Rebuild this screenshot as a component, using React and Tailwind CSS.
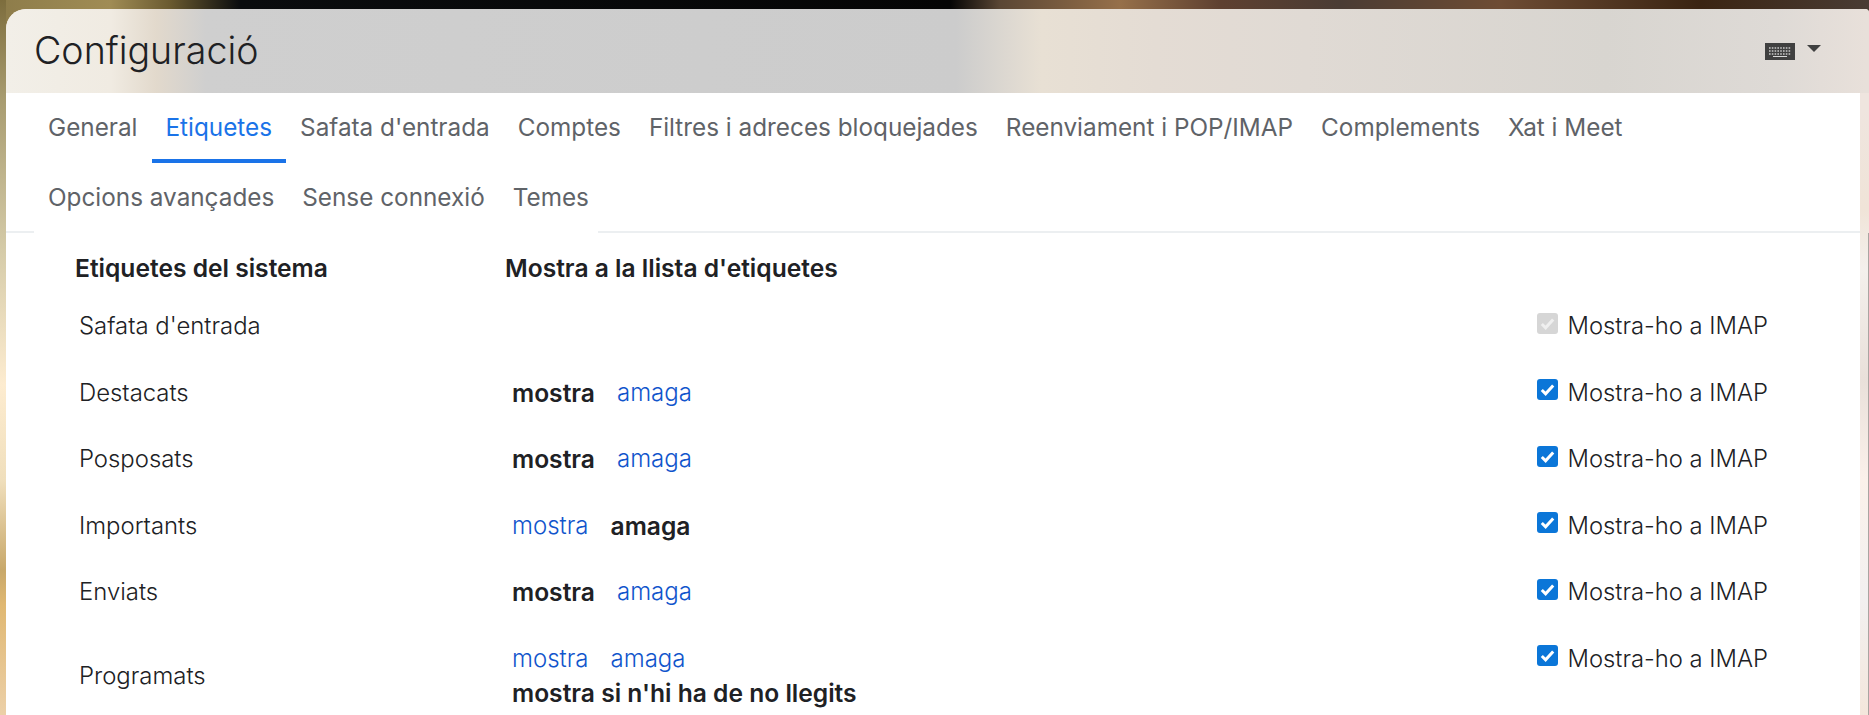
const tabsTop = ["General", "Etiquetes", "Safata d'entrada", "Comptes", "Filtres i adreces bloquejades", "Reenviament i POP/IMAP", "Complements", "Xat i Meet"];
const tabsBottom = ["Opcions avançades", "Sense connexió", "Temes"];

const Tab = ({ label }) => {
  const active = label === "Etiquetes";
  return (
    <div className={"h-[70px] px-[14px] pt-[16px] text-[24.3px] leading-[36px] whitespace-nowrap " + (active ? "text-[#1a73e8] border-b-[4px] border-[#1a73e8]" : "text-[#5f6368]")}>
      {label}
    </div>
  );
};

const Check = ({ disabled }) => (
  <span className={"w-[21px] h-[21px] rounded-[3px] flex items-center justify-center mt-[-6px] " + (disabled ? "bg-[#d6d6d6]" : "bg-[#0b76d8]")}>
    <svg width="15" height="15" viewBox="0 0 15 15" fill="none">
      <path d="M1.8 8l3.8 3.8L13.2 3.4" stroke={disabled ? "#efefef" : "#fff"} strokeWidth="3" />
    </svg>
  </span>
);

const Imap = ({ disabled, className = "" }) => (
  <div className={"flex items-center self-start gap-[9px] ml-auto mr-[92px] text-[23.8px] font-light leading-[32px] text-[#202124] " + className}>
    <Check disabled={disabled} />
    <span>Mostra-ho a IMAP</span>
  </div>
);

const Link = ({ children }) => <span className="font-light text-[24px] text-[#1155cc]">{children}</span>;
const Bold = ({ children }) => <span className="font-semibold text-[24.6px] text-[#202124]">{children}</span>;

const Row = ({ name, left, right, disabled }) => (
  <div className="flex items-start pt-[17px] h-[66.6px] text-[23.9px] leading-[32px] text-[#202124]">
    <div className="w-[506px] pl-[73px] font-light">{name}</div>
    <div className="flex gap-[22px]">
      {left}
      {right}
    </div>
    <Imap disabled={disabled} />
  </div>
);

export default function App() {
  return (
    <div className="relative flex h-screen w-full overflow-hidden font-['Inter',sans-serif] bg-[linear-gradient(90deg,#8d7c4a_0,#a08c55_110px,#6a5a30_170px,#0a0c0e_240px,#050505_950px,#5a4634_1000px,#96704a_1120px,#5e4030_1220px,#4a3c34_1340px,#6e4c34_1500px,#3a2412_1700px,#4a3c34_1869px)]">
      {/* photo edge on the left */}
      <div className="w-[6px] shrink-0 bg-[linear-gradient(180deg,#7d6d3d_0,#a89c70_100px,#d5cba8_250px,#fdecd0_385px,#f0dfbc_480px,#c8a86a_570px,#e0b872_605px,#ecd0a8_715px)]" />

      <div className="flex-1 min-w-0 pt-[9px]">
        <div className="h-full rounded-tl-[20px] rounded-tr-[4px] overflow-hidden bg-[linear-gradient(180deg,#efe5df_100px,#f0e4d8_200px,#f4f0ec_260px,#e9e0da_370px,#fbf1ea_470px,#f2f0f0_590px,#f4e6da_715px)]">
          <div className="flex items-center h-[84px] pl-[28px] pr-[48px] bg-[linear-gradient(90deg,#f2efe8_0,#f0ebe2_105px,#e2d9cc_150px,#cfcfcf_200px,#cccccc_950px,#e8e0d4_1035px,#e4dcd4_1150px,#e0dad4_1300px,#d8d5d0_1600px,#dedad6_1770px,#e8e0da_1860px)]">
            <h1 className="text-[37.6px] font-light leading-[50px] text-[#202124]">Configuració</h1>
            <div className="ml-auto flex items-start gap-[12px] mt-[1px]">
              <svg width="30" height="17" viewBox="0 0 30 17">
                <rect width="30" height="17" fill="#404040" />
                <path d="M4 5h22M4 8h22" stroke="#c9c9c9" strokeWidth="1.6" strokeDasharray="1.6 1.2" />
                <path d="M4 11h22" stroke="#c9c9c9" strokeWidth="1.4" strokeDasharray="1.6 1.2" />
                <path d="M8 13.5h14" stroke="#d8d8d8" strokeWidth="1.2" />
              </svg>
              <svg width="14" height="7" viewBox="0 0 14 7" className="mt-[2px]">
                <path d="M0 0h14L7 7z" fill="#404040" />
              </svg>
            </div>
          </div>

          <div className="mr-[9px] bg-white h-full">
            <div className="border-b-[2px] border-[#eceff1] h-[140px]">
              <div className="flex pl-[28px] h-[70px]">
                {tabsTop.map((t) => <Tab key={t} label={t} />)}
              </div>
              <div className="relative flex ml-[28px] w-[564px] h-[72px] bg-white">
                {tabsBottom.map((t) => <Tab key={t} label={t} />)}
              </div>
            </div>

            <div className="flex items-center h-[70px] text-[24.6px] leading-[32px] font-semibold text-[#202124]">
              <div className="w-[499px] pl-[69px]">Etiquetes del sistema</div>
              <div>Mostra a la llista d'etiquetes</div>
            </div>

            <div className="-mt-[10px]">
              <Row name="Safata d'entrada" disabled />
              <Row name="Destacats" left={<Bold>mostra</Bold>} right={<Link>amaga</Link>} />
              <Row name="Posposats" left={<Bold>mostra</Bold>} right={<Link>amaga</Link>} />
              <Row name="Importants" left={<Link>mostra</Link>} right={<Bold>amaga</Bold>} />
              <Row name="Enviats" left={<Bold>mostra</Bold>} right={<Link>amaga</Link>} />
              <div className="flex text-[23.9px] leading-[35px] text-[#202124] pt-[15px]">
                <div className="w-[506px] pl-[73px] pt-[17px] font-light">Programats</div>
                <div>
                  <div className="flex gap-[22px]"><Link>mostra</Link><Link>amaga</Link></div>
                  <Bold>mostra si n'hi ha de no llegits</Bold>
                </div>
                <Imap className="mt-[2px]" />
              </div>
            </div>
          </div>
        </div>
      </div>

      {/* dark edge of the window behind */}
      <div className="absolute right-0 top-[233px] bottom-0 w-px bg-[#a9a5a1]" />
    </div>
  );
}
